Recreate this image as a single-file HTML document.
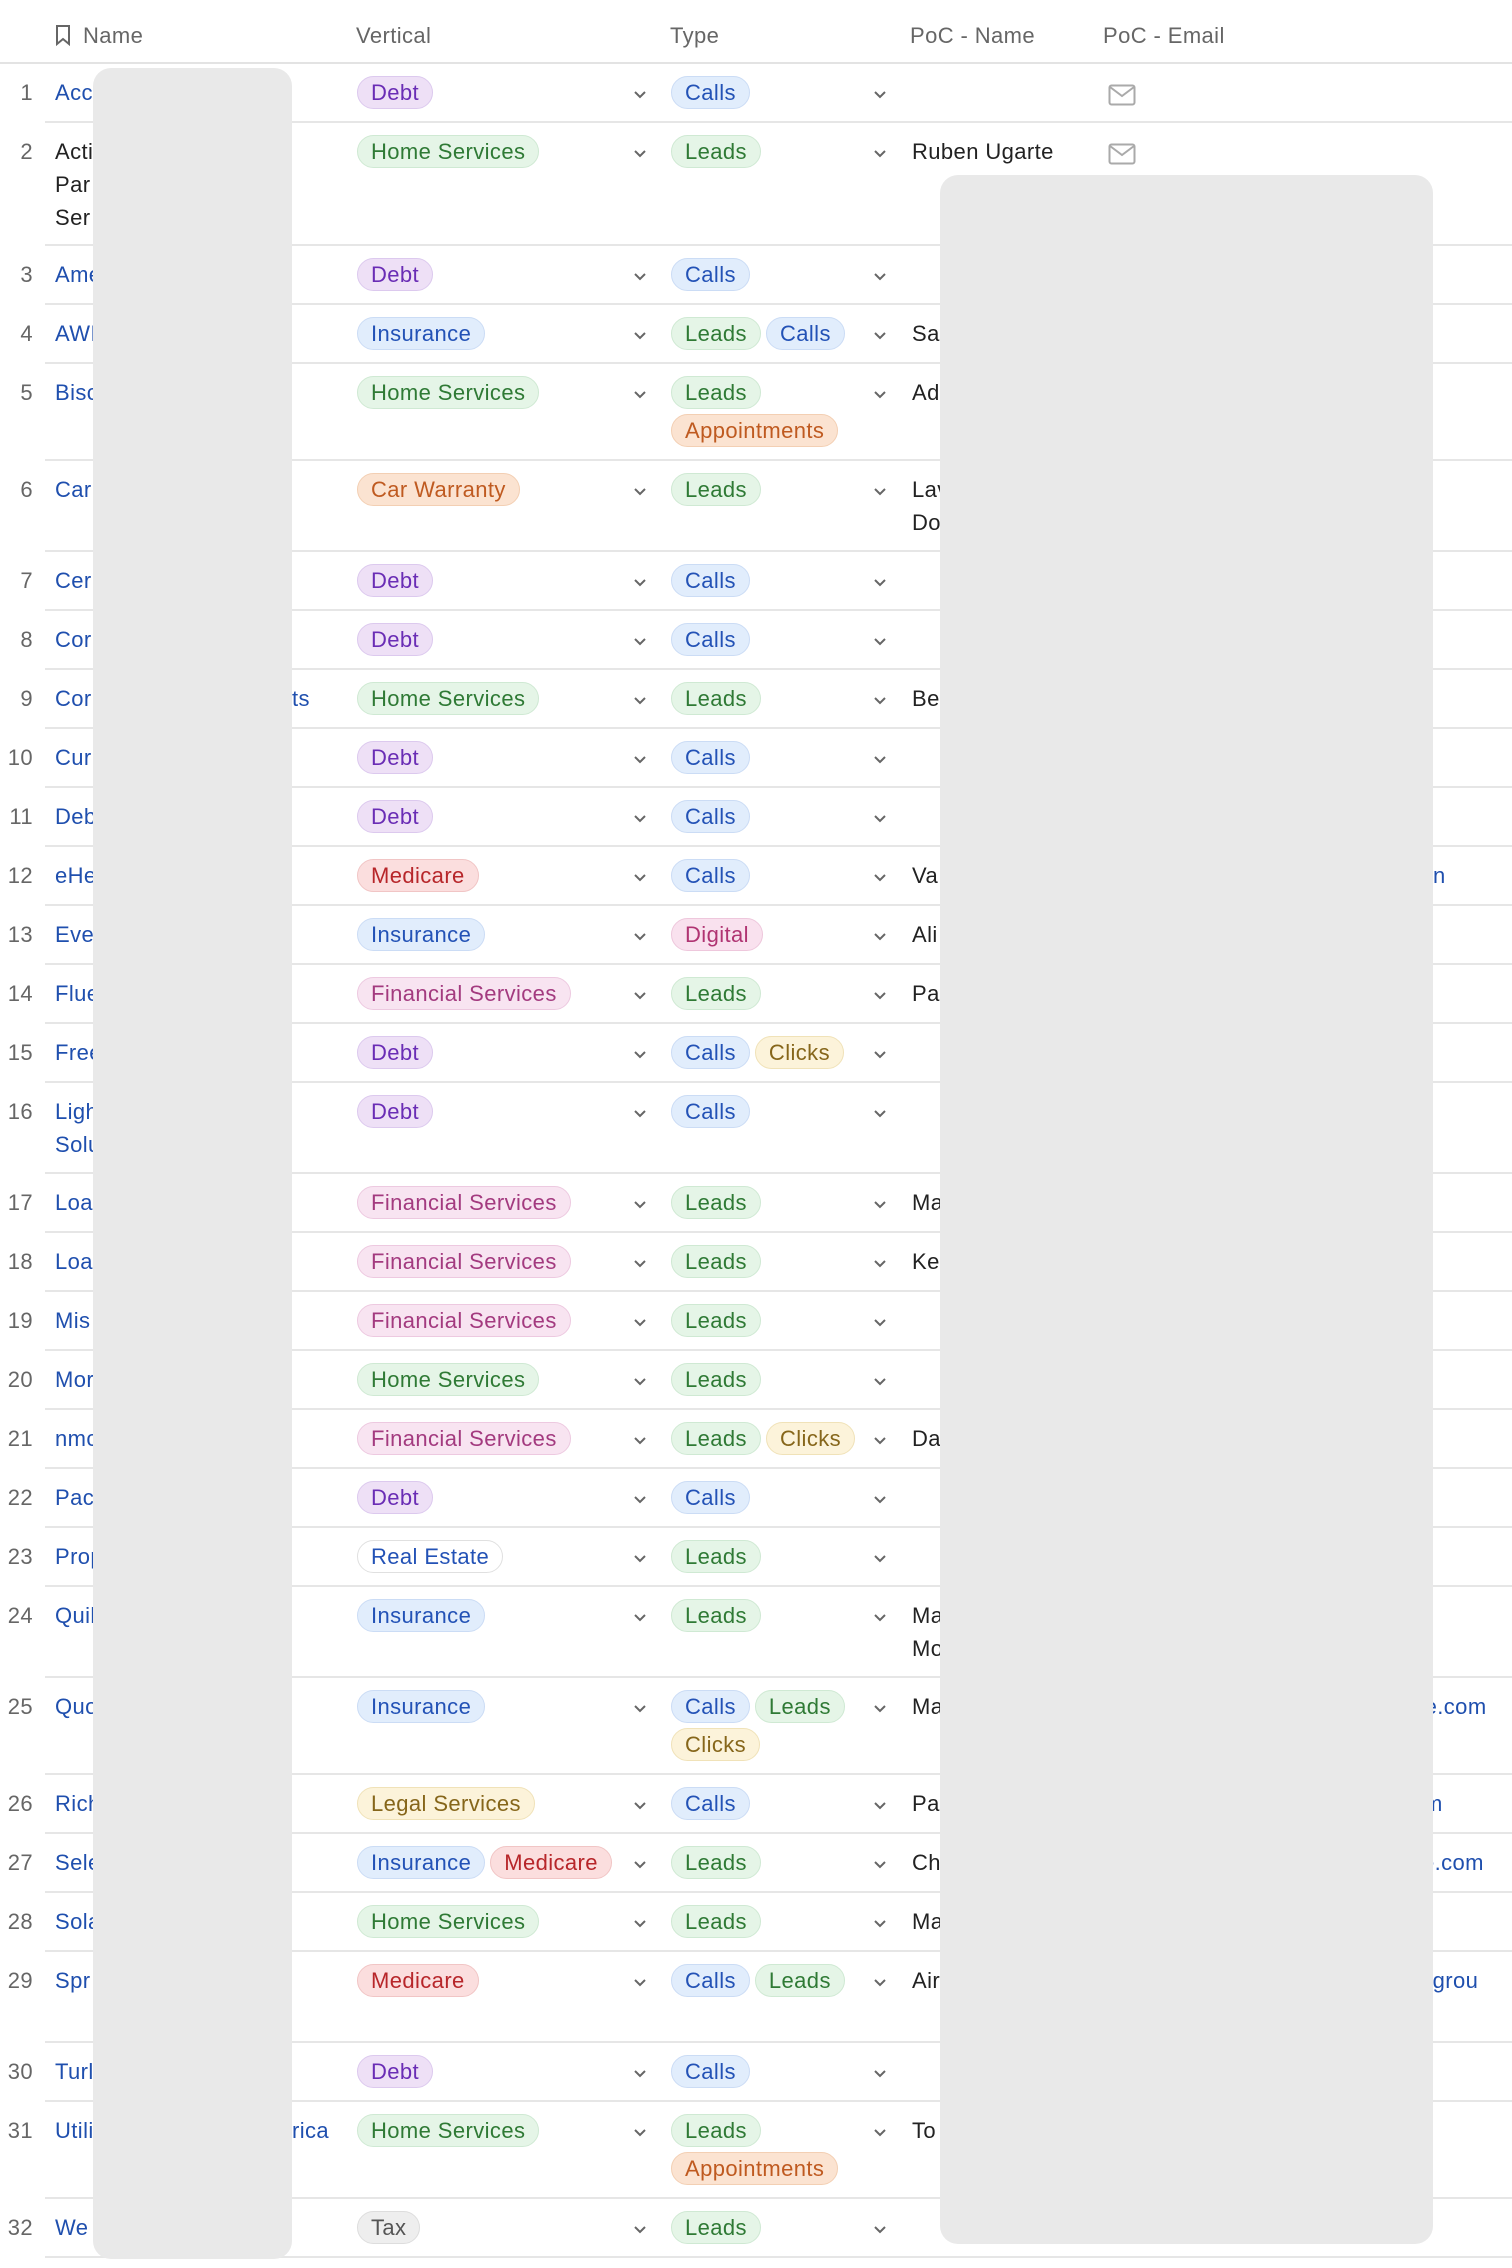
<!DOCTYPE html>
<html><head><meta charset="utf-8"><style>
*{box-sizing:border-box;margin:0;padding:0}
body{width:1512px;height:2268px;background:#fff;font-family:"Liberation Sans",sans-serif;font-size:22px;letter-spacing:0.4px;color:#222;position:relative;overflow:hidden}
.hdr{position:absolute;left:0;top:0;width:1512px;height:64px;border-bottom:2px solid #e3e3e3;color:#666}
.hdr span{position:absolute;top:23px}
.row{position:relative;border-bottom:2px solid #e6e6e6;margin-left:45px;width:1467px}
.row>div{position:absolute;top:12px;line-height:33px}
.num{left:-45px;width:33px;text-align:right;color:#666}
.nm{left:10px;color:#1f4fae}
.vt{left:312px;width:275px;display:flex;flex-wrap:wrap;gap:5px}
.ty{left:626px;width:205px;display:flex;flex-wrap:wrap;gap:5px}
.ch1{left:588px}.ch2{left:828px}
.pn{left:867px;color:#222}
.em{left:1063px;top:18px!important}
.p{display:inline-block;height:33px;line-height:31px;padding:0 13px;border-radius:17px;border:1px solid;white-space:nowrap}
.debt{background:#eee0f6;color:#6a2db5;border-color:#dcc9ee}
.home,.leads{background:#e5f5e7;color:#2f7a35;border-color:#cfe9d3}
.calls,.ins{background:#e1edfc;color:#2352b6;border-color:#cbdcf5}
.app,.car{background:#fbe3d1;color:#bf5a20;border-color:#f3cfb3}
.med{background:#fbdede;color:#b7262a;border-color:#f1c5c5}
.dig{background:#f9e1ee;color:#b03472;border-color:#eec7dc}
.fin{background:#f8e4f1;color:#a33a7f;border-color:#edc9e0}
.clk,.legal{background:#fcf3da;color:#86661a;border-color:#f0e2b8}
.re{background:#fff;color:#2352b6;border-color:#e0e0e0}
.tax{background:#eeeeee;color:#555;border-color:#dddddd}
.blk{position:absolute;background:#e9e9e9;border-radius:18px}
</style></head><body>
<div class="hdr">
<svg style="position:absolute;left:55px;top:24px" width="16" height="22" viewBox="0 0 16 22"><path d="M2 2h12v18l-6-5-6 5z" fill="none" stroke="#666" stroke-width="2"/></svg>
<span style="left:83px">Name</span><span style="left:356px">Vertical</span><span style="left:670px">Type</span><span style="left:910px">PoC - Name</span><span style="left:1103px">PoC - Email</span>
</div>
<div style="position:absolute;top:64px;left:0">
<div id="rows"></div>
</div>
<script>
const C='<svg width="14" height="10" viewBox="0 0 14 10"><path d="M2 2l5 5 5-5" fill="none" stroke="#666" stroke-width="2"/></svg>';
const M='<svg width="28" height="22" viewBox="0 0 28 22"><rect x="1.5" y="1.5" width="25" height="19" rx="2" fill="none" stroke="#aaa" stroke-width="2"/><path d="M2 3l12 9 12-9" fill="none" stroke="#aaa" stroke-width="2"/></svg>';
const K={Debt:'debt','Home Services':'home',Calls:'calls',Leads:'leads',Insurance:'ins',Appointments:'app','Car Warranty':'car',Medicare:'med',Digital:'dig','Financial Services':'fin',Clicks:'clk','Real Estate':'re','Legal Services':'legal',Tax:'tax'};
const R=[
[59,'Acc',['Debt'],['Calls'],'',1],
[123,'Acti<br>Par<br>Ser',['Home Services'],['Leads'],'Ruben Ugarte',1,'blk'],
[59,'Ame',['Debt'],['Calls'],''],
[59,'AWI',['Insurance'],['Leads','Calls'],'Sa'],
[97,'Bisc',['Home Services'],['Leads','Appointments'],'Ad'],
[91,'Car',['Car Warranty'],['Leads'],'Lav<br>Do'],
[59,'Cer',['Debt'],['Calls'],''],
[59,'Cor',['Debt'],['Calls'],''],
[59,'Cor',['Home Services'],['Leads'],'Be','', '', 'ts'],
[59,'Cur',['Debt'],['Calls'],''],
[59,'Deb',['Debt'],['Calls'],''],
[59,'eHe',['Medicare'],['Calls'],'Va','','','', 'n',1433],
[59,'Eve',['Insurance'],['Digital'],'Ali'],
[59,'Flue',['Financial Services'],['Leads'],'Pa'],
[59,'Free',['Debt'],['Calls','Clicks'],''],
[91,'Ligh<br>Solu',['Debt'],['Calls'],''],
[59,'Loa',['Financial Services'],['Leads'],'Ma'],
[59,'Loa',['Financial Services'],['Leads'],'Ke'],
[59,'Mis',['Financial Services'],['Leads'],''],
[59,'Mor',['Home Services'],['Leads'],''],
[59,'nmc',['Financial Services'],['Leads','Clicks'],'Da'],
[59,'Pac',['Debt'],['Calls'],''],
[59,'Prop',['Real Estate'],['Leads'],''],
[91,'Quil',['Insurance'],['Leads'],'Ma<br>Mo'],
[97,'Quo',['Insurance'],['Calls','Leads','Clicks'],'Ma','','','','ee.com',1412],
[59,'Rich',['Legal Services'],['Calls'],'Pa','','','','m',1424],
[59,'Sele',['Insurance','Medicare'],['Leads'],'Ch','','','','e.com',1422],
[59,'Sola',['Home Services'],['Leads'],'Ma'],
[91,'Spr',['Medicare'],['Calls','Leads'],'Air','','','','egrou',1420],
[59,'Turl',['Debt'],['Calls'],''],
[97,'Utili',['Home Services'],['Leads','Appointments'],'To','','','rica'],
[59,'We',['Tax'],['Leads'],'']];
let h='';R.forEach((r,i)=>{
const pl=a=>a.map(t=>`<span class="p ${K[t]}">${t}</span>`).join('');
h+=`<div class="row" style="height:${r[0]}px"><div class="num">${i+1}</div><div class="nm" ${r[6]?'style="color:#222"':''}>${r[1]}</div>`+
(r[7]?`<div class="nm" style="left:247px">${r[7]}</div>`:'')+
`<div class="vt">${pl(r[2])}</div><div class="ch1">${C}</div><div class="ty">${pl(r[3])}</div><div class="ch2">${C}</div><div class="pn">${r[4]}</div>`+
(r[5]?`<div class="em">${M}</div>`:'')+
(r[8]?`<div class="nm" style="left:${r[9]-45}px">${r[8]}</div>`:'')+`</div>`;});
document.getElementById('rows').innerHTML=h;
</script>
<div class="blk" style="left:93px;top:68px;width:199px;height:2191px"></div>
<div class="blk" style="left:940px;top:175px;width:493px;height:2069px"></div>
</body></html>
